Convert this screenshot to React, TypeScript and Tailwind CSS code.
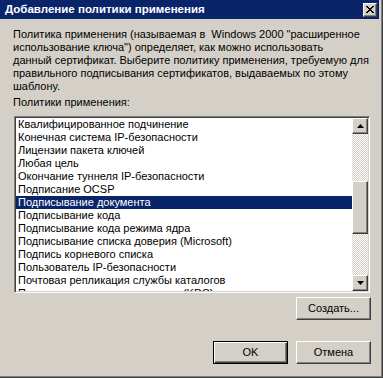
import React from "react";

const items = [
  "Квалифицированное подчинение",
  "Конечная система IP-безопасности",
  "Лицензии пакета ключей",
  "Любая цель",
  "Окончание туннеля IP-безопасности",
  "Подписание OCSP",
  "Подписывание документа",
  "Подписывание кода",
  "Подписывание кода режима ядра",
  "Подписывание списка доверия (Microsoft)",
  "Подпись корневого списка",
  "Пользователь IP-безопасности",
  "Почтовая репликация службы каталогов",
  "Проверка подлинности клиента (KDC)",
];

const selected = 6;

const raised =
  "border border-t-white border-l-white border-r-[#404040] border-b-[#404040] shadow-[inset_-1px_-1px_#808080]";

function Arrow({ up }: { up?: boolean }) {
  return (
    <svg width="7" height="4" viewBox="0 0 7 4" className="block">
      {up ? <path d="M3.5 0 L7 4 L0 4 Z" fill="#000" /> : <path d="M0 0 L7 0 L3.5 4 Z" fill="#000" />}
    </svg>
  );
}

function Button({ label, isDefault }: { label: string; isDefault?: boolean }) {
  const cls = isDefault
    ? "border border-black shadow-[inset_1px_1px_#fff,inset_-1px_-1px_#404040,inset_-2px_-2px_#808080]"
    : raised;
  return (
    <div className={`flex h-[23px] w-[75px] items-center justify-center bg-[#d4d0c8] text-[11px] text-black ${cls}`}>
      {label}
    </div>
  );
}

export default function App() {
  return (
    <div className="flex h-[378px] w-[383px] flex-col border-b border-r border-[#404040] bg-[#d4d0c8] pr-[3px] font-['Liberation_Sans',Arial,sans-serif] text-black shadow-[inset_-1px_-1px_#808080]">
      {/* заголовок окна */}
      <div className="flex h-[19px] shrink-0 items-center justify-between bg-[#0a246a] pl-[5px] pr-[2px]">
        <span className="text-[11.5px] font-bold leading-none text-white">Добавление политики применения</span>
        <div className={`flex h-[14px] w-[14px] items-center justify-center bg-[#d4d0c8] ${raised}`}>
          <svg width="8" height="7" viewBox="0 0 8 7" className="block">
            <path d="M0 0h2v1h1v1h2v-1h1v-1h2v1h-1v1h-1v1h-1v1h1v1h1v1h1v1h-2v-1h-1v-1h-2v1h-1v1h-2v-1h1v-1h1v-1h1v-1h-1v-1h-1v-1h-1z" fill="#000" />
          </svg>
        </div>
      </div>

      <div className="flex flex-col pl-[14px] pr-[5px]">
        <p className="ml-[-1px] mt-[9px] whitespace-pre text-[11px] leading-[13px]">
          {"Политика применения (называемая в  Windows 2000 \"расширенное\n" +
            "использование ключа\") определяет, как можно использовать\n" +
            "данный сертификат. Выберите политику применения, требуемую для\n" +
            "правильного подписывания сертификатов, выдаваемых по этому\n" +
            "шаблону."}
        </p>
        <div className="ml-[-1px] mt-[3px] text-[11px] leading-[13px]">Политики применения:</div>

        {/* список */}
        <div className="mt-[7px] flex h-[177px] w-[356px] border border-b-white border-l-[#808080] border-r-white border-t-[#808080] bg-white p-px shadow-[inset_1px_1px_#404040,inset_-1px_-1px_#d4d0c8]">
          <div className="flex-1 overflow-hidden">
            {items.map((t, i) => (
              <div
                key={t}
                className={`h-[13px] whitespace-nowrap pl-[2px] text-[11px] leading-[13px] ${
                  i === selected ? "bg-[#0a246a] text-white" : "text-black"
                }`}
              >
                {t}
              </div>
            ))}
          </div>
          <div className="flex w-[16px] flex-col bg-[#d4d0c8]">
            <div className={`flex h-[16px] items-center justify-center ${raised}`}>
              <Arrow up />
            </div>
            <div className="flex flex-1 flex-col bg-[image:repeating-conic-gradient(#d4d0c8_0%_25%,#ffffff_0%_50%)] bg-[length:2px_2px]">
              <div className="h-[47px]" />
              <div className={`h-[53px] bg-[#d4d0c8] ${raised}`} />
            </div>
            <div className={`flex h-[16px] items-center justify-center ${raised}`}>
              <Arrow />
            </div>
          </div>
        </div>

        <div className="mt-[4px] flex justify-end pr-[3px]">
          <Button label="Создать..." />
        </div>
        <div className="mt-[21px] flex justify-end gap-[8px] pr-[3px]">
          <Button label="OK" isDefault />
          <Button label="Отмена" />
        </div>
      </div>
    </div>
  );
}
